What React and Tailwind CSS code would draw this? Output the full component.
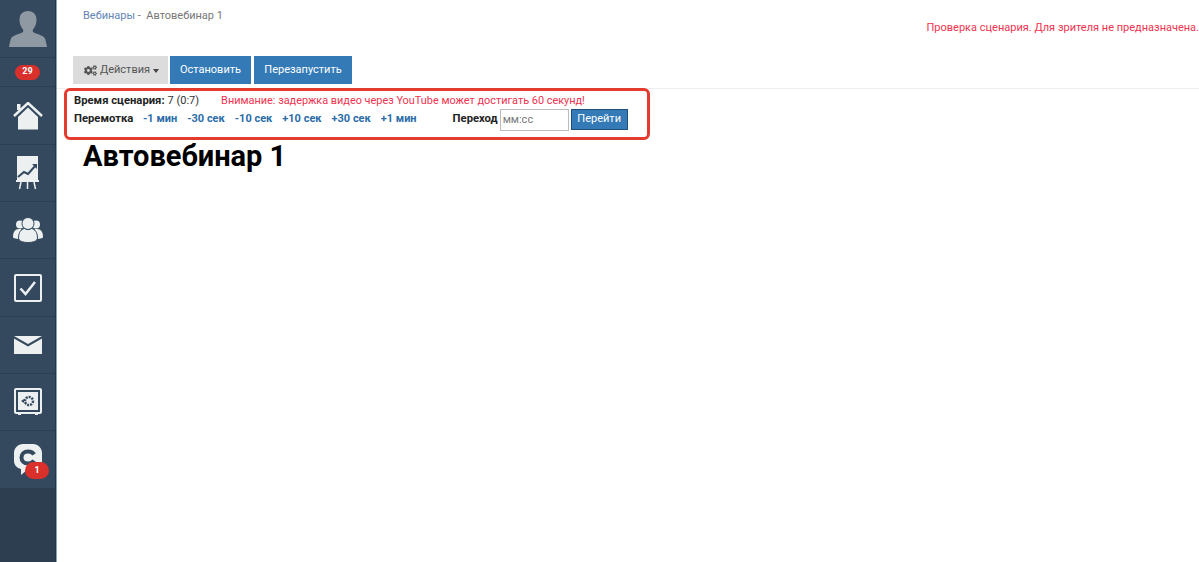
import React from 'react';
import { FaCogs } from 'react-icons/fa';

const Avatar = () => (
  <svg width="38" height="36" viewBox="0 0 38 36" fill="#8f99a3">
    <path d="M19 0c5.500 0 8.500 3.500 8.500 9 0 4-1.500 7-3.500 9.500-1 1.500 0 3 3 4 4 1.500 8 2.500 9 5 .6 2 1.500 5 2 8.500H0c.5-3.500 1.400-6.500 2-8.500 1-2.500 5-3.500 9-5 3-1 4-2.500 3-4-2-2.500-3.500-5.500-3.500-9.500C10.500 3.500 13.500 0 19 0z" />
  </svg>
);

const HomeIcon = () => (
  <svg width="30" height="28" viewBox="0 0 30 28">
    <path d="M1 14 15 1l14 13" fill="none" stroke="#ecf0f1" strokeWidth="2.500" />
    <rect x="4" y="2" width="3.500" height="6" fill="#ecf0f1" />
    <path d="M5 15 15 5.500 25 15v12.500H5z" fill="#ecf0f1" />
  </svg>
);

const ChartIcon = () => (
  <svg width="24" height="34" viewBox="0 0 24 34">
    <rect x="1" y="0" width="21" height="24" fill="#ecf0f1" />
    <path d="M2 21l6-5 4 2 8-9" fill="none" stroke="#34495e" strokeWidth="2" />
    <path d="M16 8h5v5z" fill="#34495e" />
    <rect x="0" y="24" width="23" height="2" fill="#ecf0f1" />
    <path d="M5 26l-1.500 7M11.500 26v7M18 26l1.500 7" stroke="#ecf0f1" strokeWidth="1.500" />
  </svg>
);

const PeopleIcon = () => (
  <svg width="30" height="26" viewBox="0 0 30 26" fill="#ecf0f1">
    <circle cx="7" cy="7.500" r="4" />
    <circle cx="23" cy="7.500" r="4" />
    <path d="M0 20c0-5 2-8 6-8h2v10c-4 0-8-.5-8-2zM30 20c0-5-2-8-6-8h-2v10c4 0 8-.5 8-2z" />
    <circle cx="15" cy="6.500" r="6" stroke="#34495e" strokeWidth="1" />
    <path d="M5.500 21c0-6 3-9 6-9.500 2 1.500 5 1.500 7 0 3 .5 6 3.500 6 9.500 0 3-4.500 4.500-9.500 4.500S5.500 24 5.500 21z" stroke="#34495e" strokeWidth="1" />
  </svg>
);

const CheckIcon = () => (
  <svg width="28" height="28" viewBox="0 0 28 28">
    <rect x="1" y="1" width="26" height="26" rx="1" fill="none" stroke="#ecf0f1" strokeWidth="2" />
    <path d="M6.500 14.500 11.500 20 21 8" fill="none" stroke="#ecf0f1" strokeWidth="2.500" />
  </svg>
);

const MailIcon = () => (
  <svg width="28" height="18" viewBox="0 0 28 18" fill="#ecf0f1">
    <path d="M0 0h28L14 8z" />
    <path d="M0 2.500 14 10.500 28 2.500V18H0z" />
  </svg>
);

const SafeIcon = () => (
  <svg width="28" height="28" viewBox="0 0 28 28">
    <rect x="1" y="1" width="26" height="24" rx="1" fill="none" stroke="#ecf0f1" strokeWidth="2" />
    <rect x="4" y="4" width="20" height="18" fill="#ecf0f1" />
    <circle cx="15" cy="13" r="4" fill="none" stroke="#34495e" strokeWidth="2.500" strokeDasharray="2 1" />
    <path d="M7 13l3-2v4z" fill="#34495e" />
    <path d="M4 25h3v2H4zM21 25h3v2h-3z" fill="#ecf0f1" />
  </svg>
);

const ChatIcon = () => (
  <svg width="28" height="32" viewBox="0 0 28 32">
    <path d="M9 0h10c5 0 9 4 9 9v8c0 5-4 9-9 9h-6l-6 5v-6c-4-1-7-4-7-8V9c0-5 4-9 9-9z" fill="#ecf0f1" />
    <path d="M20 10.500c-1-2-3-3-6-3-4 0-6.500 2.500-6.500 6s2.500 6 6.500 6c3 0 5-1 6-3" fill="none" stroke="#34495e" strokeWidth="4" />
  </svg>
);

const Badge = ({ children, className }) => (
  <span className={`flex items-center justify-center rounded-full bg-[#d9302c] font-bold text-white ${className}`}>
    {children}
  </span>
);

const items = [
  { icon: <HomeIcon />, h: 'h-[58px]' },
  { icon: <ChartIcon />, h: 'h-[57px]' },
  { icon: <PeopleIcon />, h: 'h-[57px]' },
  { icon: <CheckIcon />, h: 'h-[58px]' },
  { icon: <MailIcon />, h: 'h-[57px]' },
  { icon: <SafeIcon />, h: 'h-[57px]' },
];

const skips = ['-1 мин', '-30 сек', '-10 сек', '+10 сек', '+30 сек', '+1 мин'];

export default function App() {
  return (
    <div className="flex h-[562px] w-[1199px] overflow-hidden bg-white font-['Roboto','Liberation_Sans',sans-serif] text-[11px] text-[#333]">
      <aside className="h-full w-[57px] shrink-0 border-r border-[#8fa0b0]">
        <div className="flex h-full flex-col border-r border-[#26364a] bg-[#2d3e50]">
          <div className="flex h-[57px] items-end justify-center bg-[#34495e] pb-[10px]">
            <Avatar />
          </div>
          <div className="flex h-[29px] items-center justify-center border-t border-[#2c3e50] bg-[#34495e]">
            <Badge className="h-[15px] w-[25px] text-[9px]">29</Badge>
          </div>
          {items.map((item, i) => (
            <div key={i} className={`flex items-center justify-center border-t border-[#2c3e50] bg-[#34495e] ${item.h}`}>
              {item.icon}
            </div>
          ))}
          <div className="relative flex h-[58px] items-center justify-center border-t border-[#2c3e50] bg-[#34495e]">
            <ChatIcon />
            <Badge className="absolute left-[25px] top-[31px] h-[17px] w-[24px] text-[9px]">1</Badge>
          </div>
        </div>
      </aside>

      <main className="min-w-0 flex-1">
        <div className="flex h-[56px] items-start justify-between">
          <div className="ml-[26px] mt-[9px] whitespace-nowrap leading-[14px] text-[#777]">
            <a className="text-[#6583b5]">Вебинары</a>
            <span> -&nbsp; Автовебинар 1</span>
          </div>
          <div className="mt-[20px] whitespace-nowrap leading-[15px] text-[#f0324f]">
            Проверка сценария. Для зрителя не предназначена.
          </div>
        </div>

        <div className="ml-[16px] flex h-[28px] gap-[2px]">
          <button className="flex w-[95px] items-center justify-center gap-[3px] bg-[#dcdcdc] text-[#555]">
            <FaCogs className="ml-[2px] text-[13px] text-[#555]" />
            Действия
            <span className="mt-[2px] border-x-[3.500px] border-t-[4px] border-x-transparent border-t-[#444]" />
          </button>
          <button className="w-[81px] bg-[#337ab7] text-white">Остановить</button>
          <button className="ml-[1px] w-[98px] bg-[#337ab7] text-white">Перезапустить</button>
        </div>

        <div className="mt-[4px] h-px bg-[#eeeeee]" />

        <div className="-mt-px ml-[7px] flex h-[52px] w-[586px] flex-col rounded-[6px] border-[3px] border-[#e53a2f] pl-[7px] pt-[2px]">
          <div className="flex h-[16px] items-center whitespace-nowrap">
            <b className="text-[11.250px] text-[#222]">Время сценария:</b>
            <span className="ml-[3px]">7 (0:7)</span>
            <span className="ml-[22px] text-[10.900px] text-[#f0324f]">
              Внимание: задержка видео через YouTube может достигать 60 секунд!
            </span>
          </div>
          <div className="flex h-[21px] items-center whitespace-nowrap">
            <b className="w-[69px] text-[11.250px] text-[#222]">Перемотка</b>
            <div className="flex gap-[10px] font-bold text-[#2b6ca8]">
              {skips.map((s) => (
                <a key={s}>{s}</a>
              ))}
            </div>
            <b className="ml-[36px] text-[11.250px] text-[#222]">Переход</b>
            <input
              placeholder="мм:сс"
              className="ml-[2px] h-[22px] w-[69px] border border-[#bbb] px-[2px] text-[11px] placeholder:text-[#777]"
            />
            <button className="ml-[2px] h-[21px] w-[57px] border border-[#1f4e79] bg-[#337ab7] text-white">
              Перейти
            </button>
          </div>
        </div>

        <h1 className="ml-[26px] mt-px font-['Roboto',sans-serif] text-[29px] font-bold leading-[30px] text-black">
          Автовебинар 1
        </h1>
      </main>
    </div>
  );
}
